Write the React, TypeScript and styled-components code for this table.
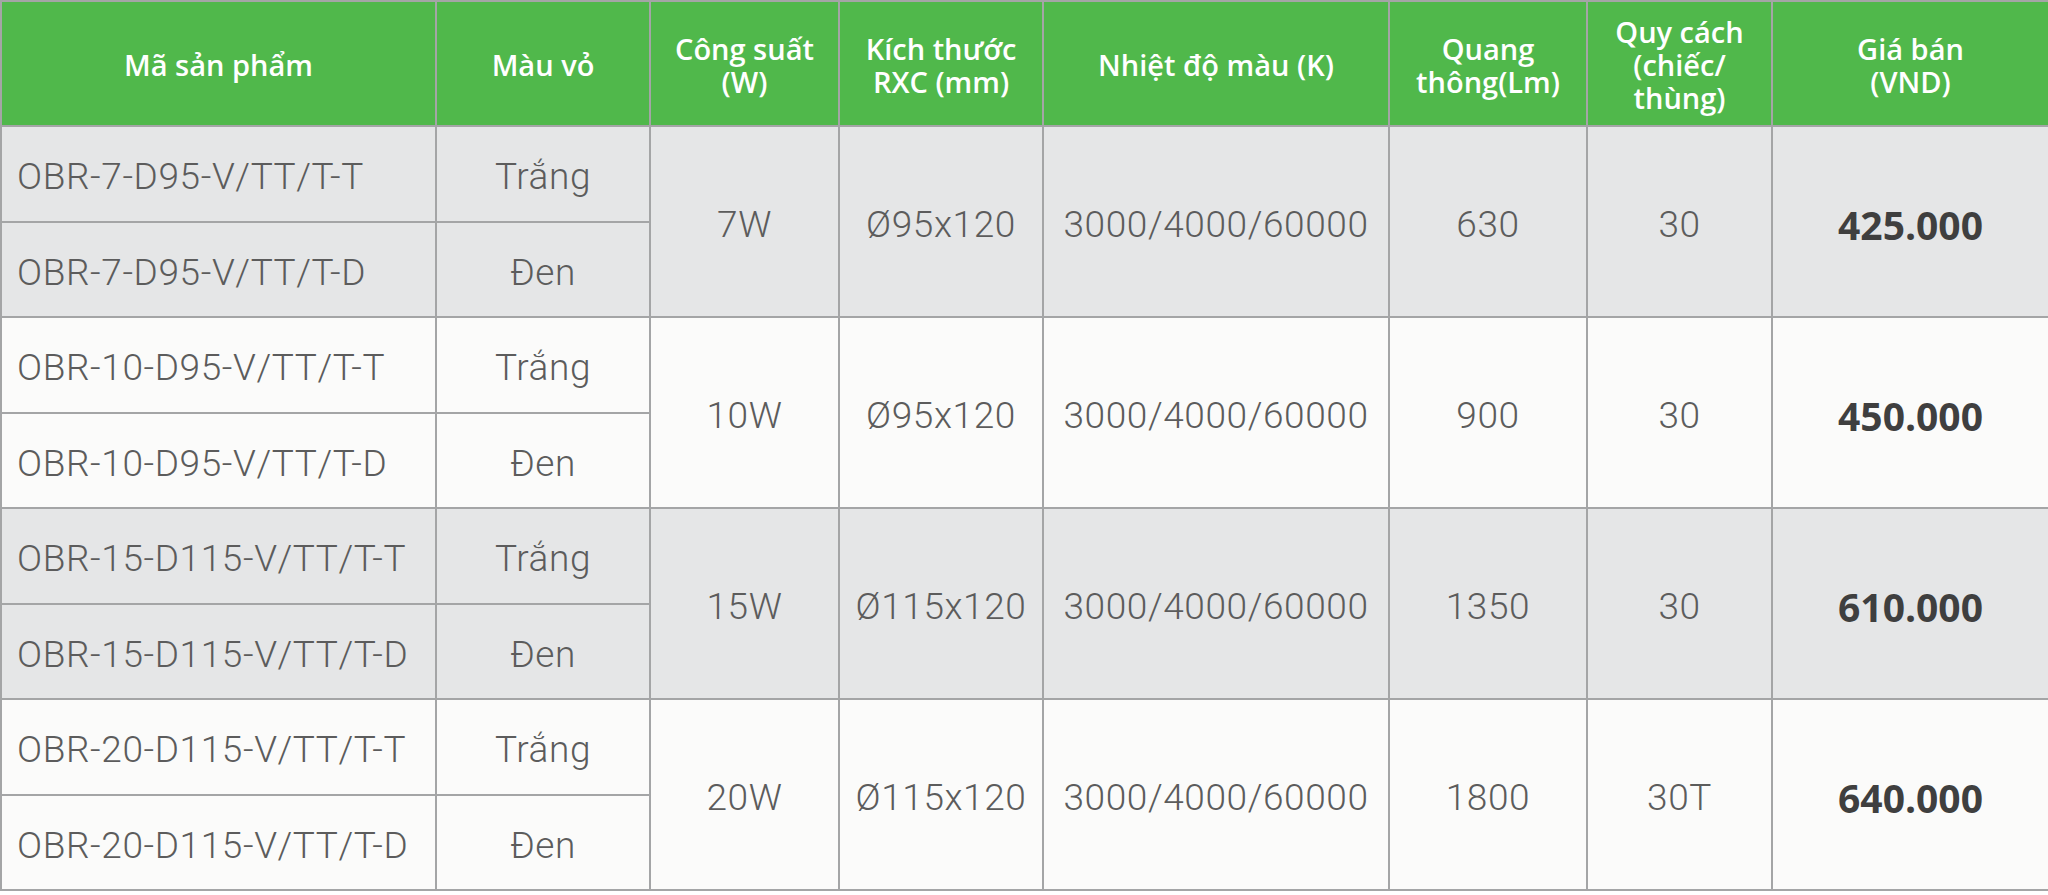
import { Fragment } from 'react'
import styled, { createGlobalStyle } from 'styled-components'

interface IVariant {
  code: string
  color: string
}

interface IGroup {
  variants: IVariant[]
  power: string
  size: string
  temp: string
  lumen: string
  pack: string
  price: string
}

const groups: IGroup[] = [
  {
    variants: [
      { code: 'OBR-7-D95-V/TT/T-T', color: 'Trắng' },
      { code: 'OBR-7-D95-V/TT/T-D', color: 'Đen' },
    ],
    power: '7W',
    size: 'Ø95x120',
    temp: '3000/4000/60000',
    lumen: '630',
    pack: '30',
    price: '425.000',
  },
  {
    variants: [
      { code: 'OBR-10-D95-V/TT/T-T', color: 'Trắng' },
      { code: 'OBR-10-D95-V/TT/T-D', color: 'Đen' },
    ],
    power: '10W',
    size: 'Ø95x120',
    temp: '3000/4000/60000',
    lumen: '900',
    pack: '30',
    price: '450.000',
  },
  {
    variants: [
      { code: 'OBR-15-D115-V/TT/T-T', color: 'Trắng' },
      { code: 'OBR-15-D115-V/TT/T-D', color: 'Đen' },
    ],
    power: '15W',
    size: 'Ø115x120',
    temp: '3000/4000/60000',
    lumen: '1350',
    pack: '30',
    price: '610.000',
  },
  {
    variants: [
      { code: 'OBR-20-D115-V/TT/T-T', color: 'Trắng' },
      { code: 'OBR-20-D115-V/TT/T-D', color: 'Đen' },
    ],
    power: '20W',
    size: 'Ø115x120',
    temp: '3000/4000/60000',
    lumen: '1800',
    pack: '30T',
    price: '640.000',
  },
]

const columns = [435, 214, 189, 204, 346, 198, 185, 277]

const headers = [
  ['Mã sản phẩm'],
  ['Màu vỏ'],
  ['Công suất', '(W)'],
  ['Kích thước', 'RXC (mm)'],
  ['Nhiệt độ màu (K)'],
  ['Quang', 'thông(Lm)'],
  ['Quy cách', '(chiếc/', 'thùng)'],
  ['Giá bán', '(VND)'],
]

const App = () => {
  return (
    <>
      <GlobalStyle />
      <Table>
        <colgroup>
          {columns.map((w, i) => (
            <col key={i} style={{ width: w }} />
          ))}
        </colgroup>
        <thead>
          <HeadRow>
            {headers.map((lines, i) => (
              <Th key={i}>
                {lines.map((line, j) => (
                  <Fragment key={j}>
                    {j > 0 && <br />}
                    {line}
                  </Fragment>
                ))}
              </Th>
            ))}
          </HeadRow>
        </thead>
        <tbody>
          {groups.map((group, gi) =>
            group.variants.map((variant, vi) => (
              <Row key={`${gi}-${vi}`} $shaded={gi % 2 === 0}>
                <Code>{variant.code}</Code>
                <Cell>{variant.color}</Cell>
                {vi === 0 && (
                  <>
                    <Cell rowSpan={2}>{group.power}</Cell>
                    <Cell rowSpan={2}>{group.size}</Cell>
                    <Cell rowSpan={2}>{group.temp}</Cell>
                    <Cell rowSpan={2}>{group.lumen}</Cell>
                    <Cell rowSpan={2}>{group.pack}</Cell>
                    <Price rowSpan={2}>{group.price}</Price>
                  </>
                )}
              </Row>
            ))
          )}
        </tbody>
      </Table>
    </>
  )
}

const colors = {
  green: '#50b84b',
  line: '#a4a5a6',
  shaded: '#e5e6e7',
  light: '#fbfbfa',
  text: '#5c5c5c',
  price: '#3f3f3f',
}

const GlobalStyle = createGlobalStyle`
  html, body {
    margin: 0;
    padding: 0;
    background: #ffffff;
  }
`

const Table = styled.table`
  width: 2048px;
  table-layout: fixed;
  border-collapse: collapse;
  font-family: 'Open Sans', 'DejaVu Sans', sans-serif;
`

const HeadRow = styled.tr`
  height: 125px;
  background: ${colors.green};
`

const Th = styled.th`
  border: 2px solid ${colors.line};
  padding: 2px 6px 0;
  color: #ffffff;
  font-weight: 600;
  font-size: 29px;
  line-height: 33px;
  text-align: center;
  vertical-align: middle;
`

const Row = styled.tr<{ $shaded: boolean }>`
  height: 95.5px;
  background: ${(p) => (p.$shaded ? colors.shaded : colors.light)};
`

const Cell = styled.td`
  border: 2px solid ${colors.line};
  padding: 6px 0 0;
  color: ${colors.text};
  font-family: Roboto, 'Open Sans', sans-serif;
  font-weight: 300;
  font-size: 37px;
  letter-spacing: 0.6px;
  text-align: center;
  vertical-align: middle;
  white-space: nowrap;
`

const Code = styled(Cell)`
  text-align: left;
  padding-left: 15px;
`

const Price = styled(Cell)`
  font-family: 'Open Sans', 'DejaVu Sans', sans-serif;
  color: ${colors.price};
  font-weight: 700;
  font-size: 39px;
  letter-spacing: 0;
`

export default App
